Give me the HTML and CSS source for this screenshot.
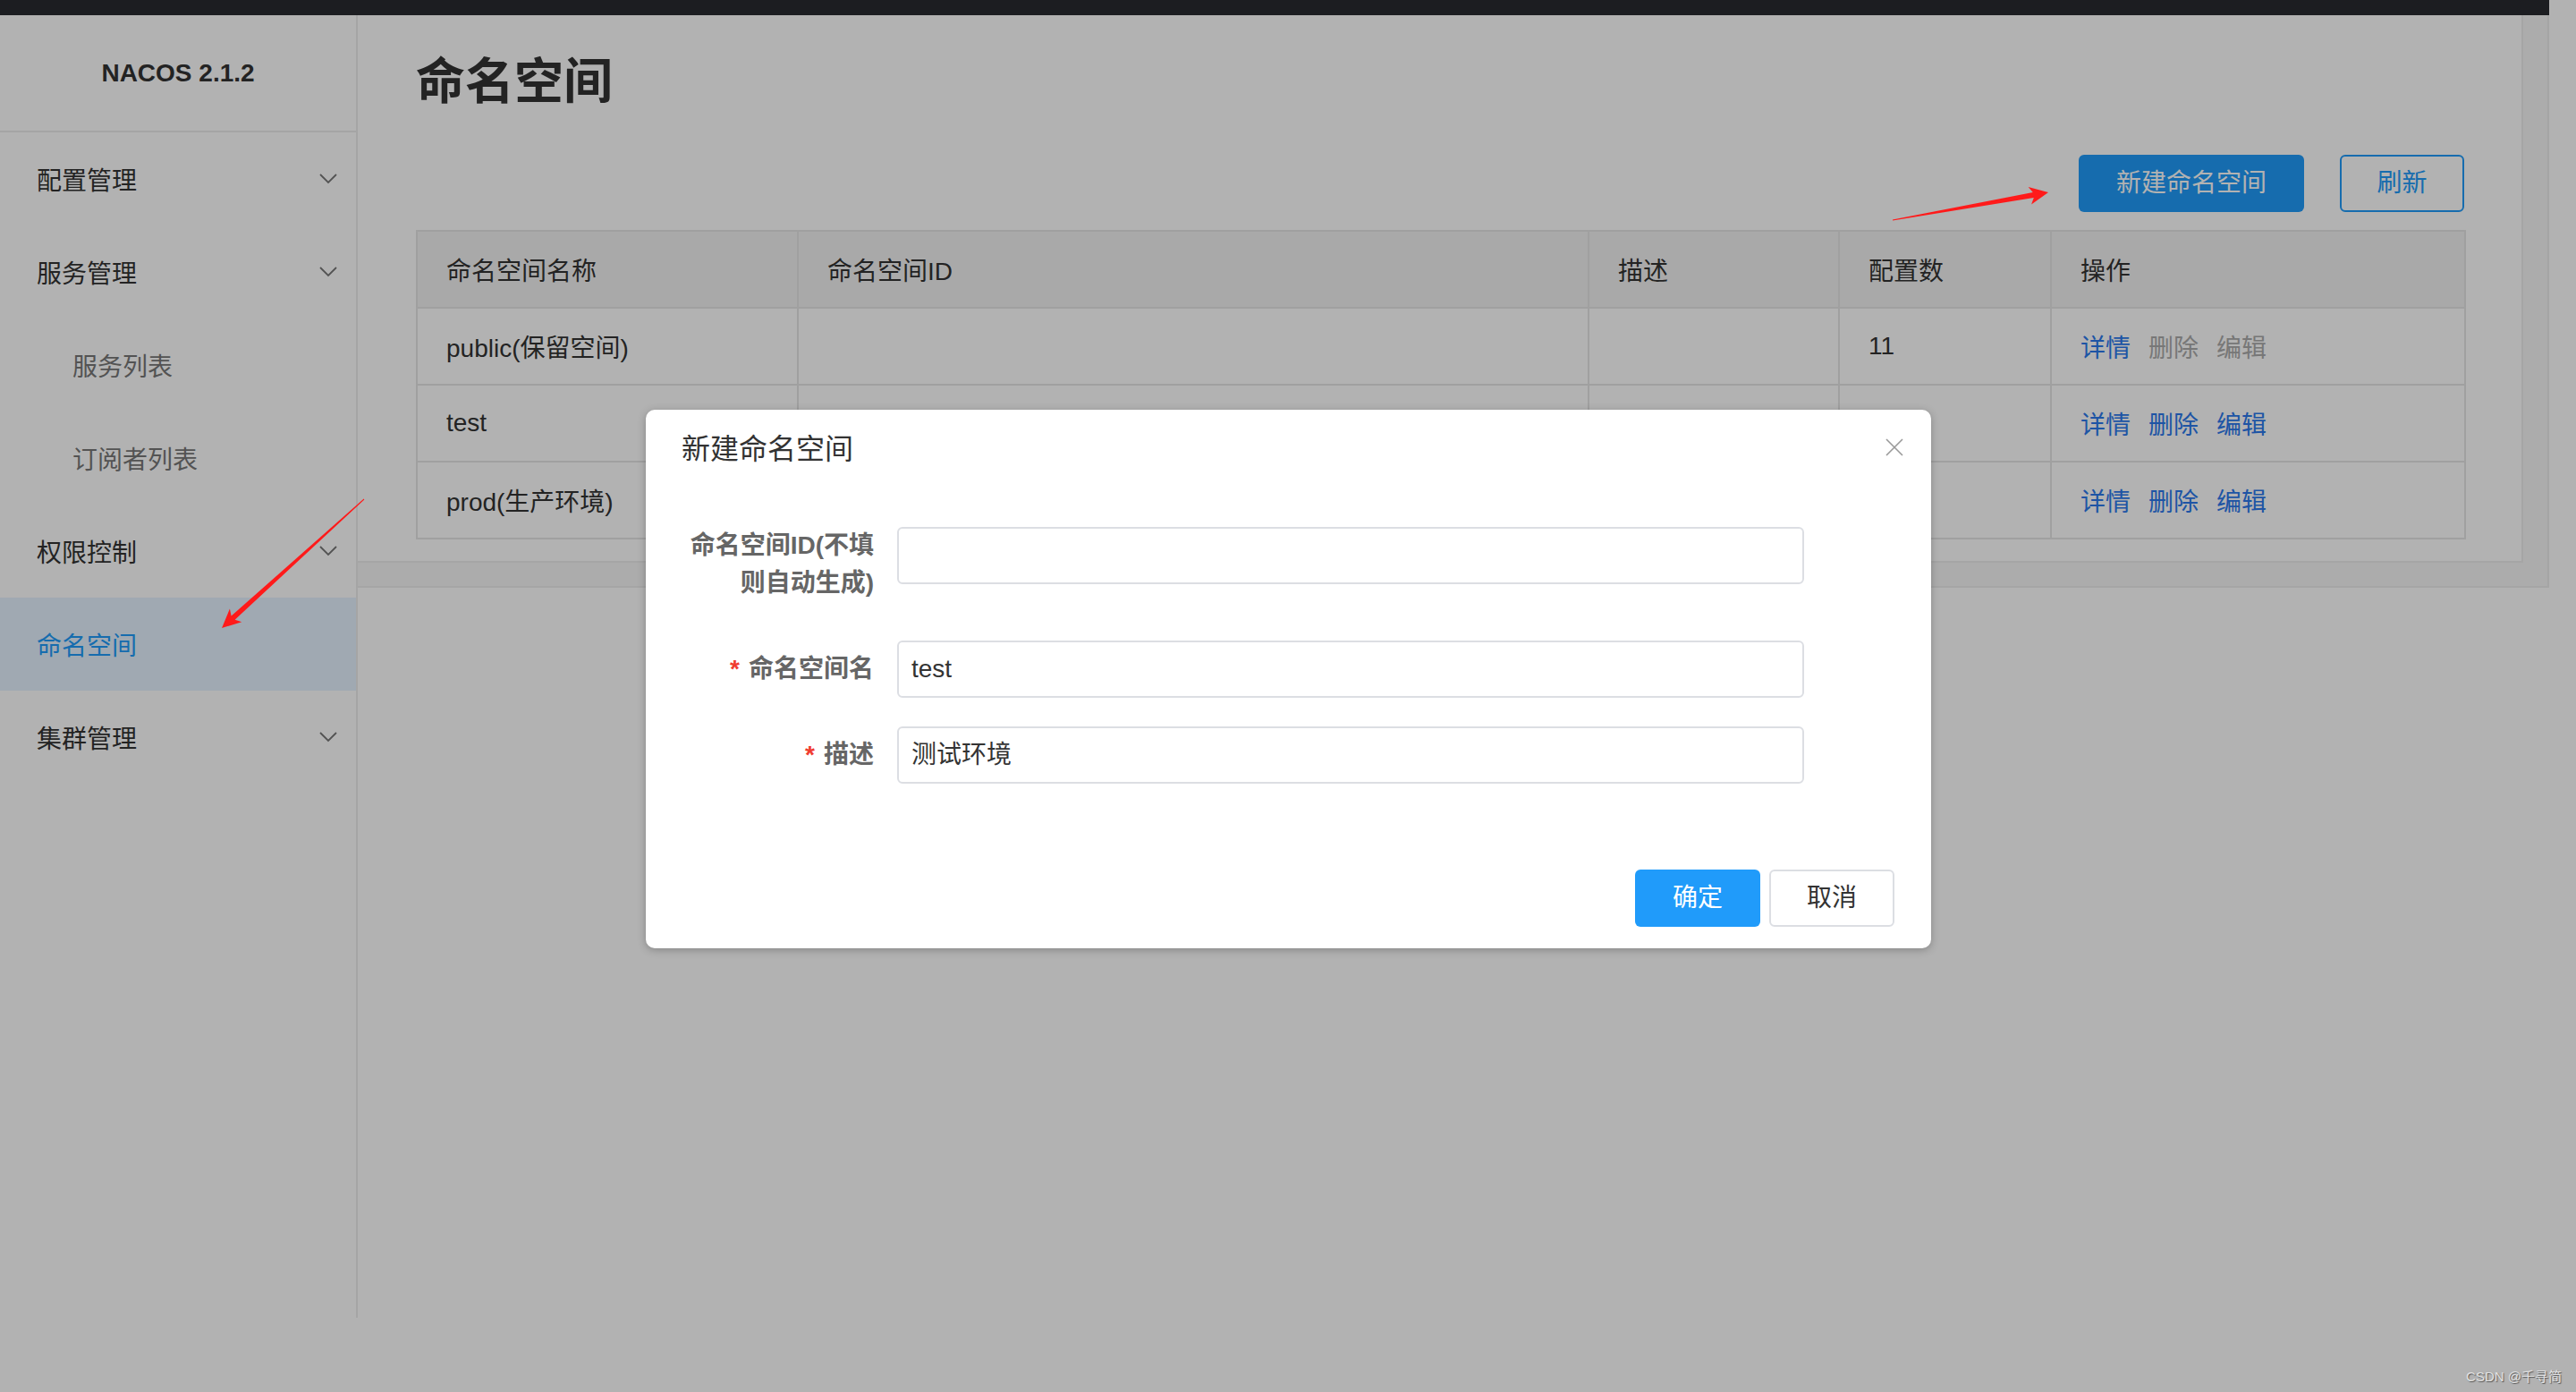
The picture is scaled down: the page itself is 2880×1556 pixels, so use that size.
FILE: index.html
```html
<!DOCTYPE html>
<html lang="zh-CN">
<head>
<meta charset="utf-8">
<title>Nacos - 命名空间</title>
<link rel="stylesheet" href="styles.css">
</head>
<body>
<div class="topbar"></div>
<div class="app">
  <aside class="sidebar">
    <div class="logo">NACOS 2.1.2</div>
    <nav class="menu">
      <div class="menu-item">配置管理<svg class="chev" viewBox="0 0 20 12"><polyline points="1,1 10,10 19,1"/></svg></div>
      <div class="menu-item">服务管理<svg class="chev" viewBox="0 0 20 12"><polyline points="1,1 10,10 19,1"/></svg></div>
      <div class="menu-item sub">服务列表</div>
      <div class="menu-item sub">订阅者列表</div>
      <div class="menu-item">权限控制<svg class="chev" viewBox="0 0 20 12"><polyline points="1,1 10,10 19,1"/></svg></div>
      <div class="menu-item active">命名空间</div>
      <div class="menu-item">集群管理<svg class="chev" viewBox="0 0 20 12"><polyline points="1,1 10,10 19,1"/></svg></div>
    </nav>
  </aside>
  <main class="main">
    <div class="outer">
      <div class="panel">
        <h1 class="page-title">命名空间</h1>
        <div class="toolbar">
          <button class="btn btn-primary">新建命名空间</button>
          <button class="btn btn-outline">刷新</button>
        </div>
        <table class="ns-table">
          <colgroup>
            <col class="c-name"><col class="c-id"><col class="c-desc"><col class="c-count"><col class="c-ops">
          </colgroup>
          <thead>
            <tr><th>命名空间名称</th><th>命名空间ID</th><th>描述</th><th>配置数</th><th>操作</th></tr>
          </thead>
          <tbody>
            <tr>
              <td>public(保留空间)</td><td></td><td></td><td>11</td>
              <td><span class="link">详情</span><span class="link disabled">删除</span><span class="link disabled">编辑</span></td>
            </tr>
            <tr>
              <td>test</td><td></td><td></td><td></td>
              <td><span class="link">详情</span><span class="link">删除</span><span class="link">编辑</span></td>
            </tr>
            <tr>
              <td>prod(生产环境)</td><td></td><td></td><td></td>
              <td><span class="link">详情</span><span class="link">删除</span><span class="link">编辑</span></td>
            </tr>
          </tbody>
        </table>
      </div>
    </div>
  </main>
</div>

<div class="mask"></div>

<div class="dialog" role="dialog">
  <div class="dialog-header">新建命名空间</div>
  <svg class="dialog-close" viewBox="0 0 20 20"><path d="M1 1L19 19M19 1L1 19"/></svg>
  <div class="dialog-body">
    <div class="form-item">
      <label class="form-label multi">命名空间ID(不填则自动生成)</label>
      <div class="input" role="textbox"></div>
    </div>
    <div class="form-item">
      <label class="form-label"><span class="req">*</span>命名空间名</label>
      <div class="input" role="textbox">test</div>
    </div>
    <div class="form-item">
      <label class="form-label"><span class="req">*</span>描述</label>
      <div class="input" role="textbox">测试环境</div>
    </div>
  </div>
  <div class="dialog-footer">
    <button class="btn btn-ok">确定</button>
    <button class="btn btn-cancel">取消</button>
  </div>
</div>

<svg class="annotations" viewBox="0 0 2880 1556">
  <polygon points="2115.9,245.5 2272.8,215.0 2267.6,208.9 2290,215 2271.1,228.6 2273.8,221.0 2116.1,246.5"/>
  <polygon points="407.3,558.4 262.6,692.8 270.3,695.3 248,702 256.9,680.5 258.6,688.4 406.7,557.6"/>
</svg>

<div class="watermark">CSDN @千寻简</div>
</body>
</html>
```

FILE: styles.css
```css
* { box-sizing: border-box; }

html, body { margin: 0; padding: 0; }

body {
  position: relative;
  width: 2880px;
  height: 1556px;
  overflow: hidden;
  background: #ffffff;
  font-family: "Liberation Sans", "Noto Sans CJK SC", sans-serif;
  font-size: 28px;
  color: #333333;
}

.topbar {
  position: relative;
  z-index: 3;
  width: 2850px;
  height: 17px;
  background: #1c1d21;
}

.app {
  display: flex;
  height: 1539px;
}

/* ---------- sidebar ---------- */
.sidebar {
  flex-shrink: 0;
  width: 400px;
  height: 1456px;
  border-right: 2px solid #ececec;
}

.logo {
  height: 131px;
  border-bottom: 2px solid #ececec;
  display: flex;
  align-items: center;
  justify-content: center;
  font-weight: bold;
  font-size: 28px;
  color: #333333;
}

.menu-item {
  height: 104px;
  display: flex;
  align-items: center;
  justify-content: space-between;
  padding: 0 21px 0 41px;
  color: #333333;
}

.menu-item.sub {
  padding-left: 81px;
  color: #777777;
}

.menu-item.active {
  background: #e5f3ff;
  color: #209bfa;
}

.chev {
  width: 20px;
  height: 12px;
  fill: none;
  stroke: #777777;
  stroke-width: 1.8;
}

/* ---------- main ---------- */
.main {
  flex: 1;
}

.outer {
  width: 2450px;
  height: 640px;
  background: #f7f7f7;
  border-right: 2px solid #ececec;
  border-bottom: 2px solid #ececec;
}

.panel {
  width: 2421px;
  height: 612px;
  background: #ffffff;
  border-right: 2px solid #ececec;
  border-bottom: 2px solid #ececec;
  padding: 0 64px 0 65px;
}

.page-title {
  margin: 0;
  padding-top: 34px;
  font-size: 55px;
  line-height: 80px;
  font-weight: bold;
  color: #333333;
}

.toolbar {
  margin-top: 42px;
  display: flex;
  justify-content: flex-end;
  gap: 40px;
}

.btn {
  height: 64px;
  padding: 0;
  border-radius: 6px;
  font-family: inherit;
  font-size: 28px;
  line-height: 1;
  cursor: pointer;
}

.btn-primary {
  width: 252px;
  background: #209bfa;
  color: #ffffff;
  border: none;
}

.btn-outline {
  width: 139px;
  background: #ffffff;
  color: #209bfa;
  border: 2px solid #209bfa;
}

/* ---------- table ---------- */
.ns-table {
  width: 2290px;
  margin-top: 20px;
  border-collapse: collapse;
  table-layout: fixed;
}

.c-name { width: 426px; }
.c-id { width: 884px; }
.c-desc { width: 280px; }
.c-count { width: 237px; }
.c-ops { width: 463px; }

.ns-table th,
.ns-table td {
  height: 86px;
  padding: 0 32px;
  border: 2px solid #e6e6e6;
  text-align: left;
  font-weight: normal;
  font-size: 28px;
  color: #333333;
  white-space: nowrap;
}

.ns-table th {
  background: #f2f2f2;
}

.link {
  margin-right: 20px;
  color: #2b79ec;
}

.link.disabled {
  color: #ababab;
}

/* ---------- dialog ---------- */
.mask {
  position: absolute;
  inset: 0;
  z-index: 1;
  background: rgba(0, 0, 0, 0.3);
}

.dialog {
  position: absolute;
  z-index: 2;
  left: 722px;
  top: 458px;
  width: 1437px;
  background: #ffffff;
  border-radius: 10px;
  box-shadow: 0 2px 10px rgba(0, 0, 0, 0.25);
}

.dialog-header {
  padding: 22px 40px 0;
  line-height: 44px;
  font-size: 32px;
  color: #333333;
}

.dialog-close {
  position: absolute;
  top: 32px;
  right: 31px;
  width: 20px;
  height: 20px;
  fill: none;
  stroke: #999999;
  stroke-width: 1.6;
}

.dialog-body {
  padding: 65px 0 0 40px;
}

.form-item {
  display: flex;
  align-items: flex-start;
  margin-bottom: 32px;
}

.form-label {
  flex-shrink: 0;
  width: 215px;
  margin-right: 26px;
  padding: 11px 0;
  text-align: right;
  line-height: 42px;
  font-weight: bold;
  color: #666666;
}

.form-label.multi {
  padding-top: 0;
}

.req {
  margin-right: 10px;
  color: #f03c2f;
}

.input {
  width: 1014px;
  height: 64px;
  padding: 0 14px;
  border: 2px solid #dcdee3;
  border-radius: 6px;
  line-height: 60px;
  color: #333333;
}

.dialog-footer {
  display: flex;
  justify-content: flex-end;
  gap: 10px;
  padding: 64px 41px 24px;
}

.btn-ok {
  width: 140px;
  background: #209bfa;
  color: #ffffff;
  border: none;
}

.btn-cancel {
  width: 140px;
  background: #ffffff;
  color: #333333;
  border: 2px solid #dcdee3;
}

/* ---------- annotations ---------- */
.annotations {
  position: absolute;
  left: 0;
  top: 0;
  width: 2880px;
  height: 1556px;
  z-index: 4;
  pointer-events: none;
  fill: #ff1a1a;
}

.watermark {
  position: absolute;
  z-index: 4;
  right: 16px;
  bottom: 8px;
  font-size: 15px;
  color: #e2e2e2;
  text-shadow: 1px 1px 1px #555555;
}
```
